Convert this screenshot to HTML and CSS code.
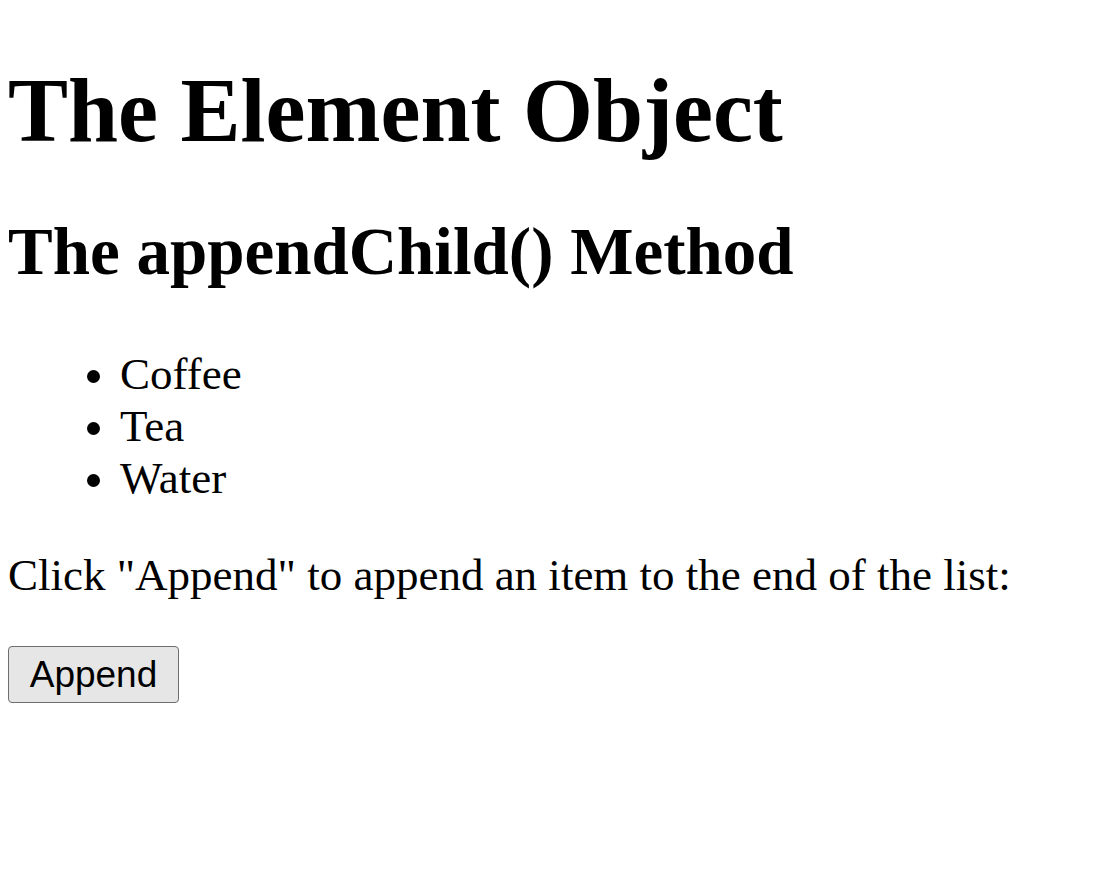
FILE: index.html
```html
<!DOCTYPE html>
<html>
<head>
<meta charset="utf-8">
<link rel="stylesheet" href="styles.css">
</head>
<body>
<h1 class="title">The Element Object</h1>
<h2 class="subtitle">The appendChild() Method</h2>
<ul class="list">
  <li>Coffee</li>
  <li>Tea</li>
  <li>Water</li>
</ul>
<p class="hint">Click "Append" to append an item to the end of the list:</p>
<button class="btn">Append</button>
</body>
</html>
```
FILE: styles.css
```css
html, body {
  background: #ffffff;
}
body {
  margin: 0;
  padding: 0 8px;
  font-family: "Liberation Serif", "Times New Roman", serif;
  font-size: 45px;
  color: #000;
}
.title {
  font-size: 90px;
  font-weight: bold;
  margin: 59px 0 0;
}
.subtitle {
  font-size: 67px;
  font-weight: bold;
  margin: 51px 0 0;
}
.list {
  margin: 58px 0 0;
  padding-left: 112px;
}
.hint {
  margin: 45px 0 0;
}
.btn {
  display: block;
  margin: 45px 0 0;
  width: 171px;
  height: 57px;
  padding: 0;
  font-family: "Liberation Sans", Arial, sans-serif;
  font-size: 37px;
  color: #000;
  background: #e6e6e6;
  border: 1px solid #6e6e6e;
  border-radius: 4px;
}
```
